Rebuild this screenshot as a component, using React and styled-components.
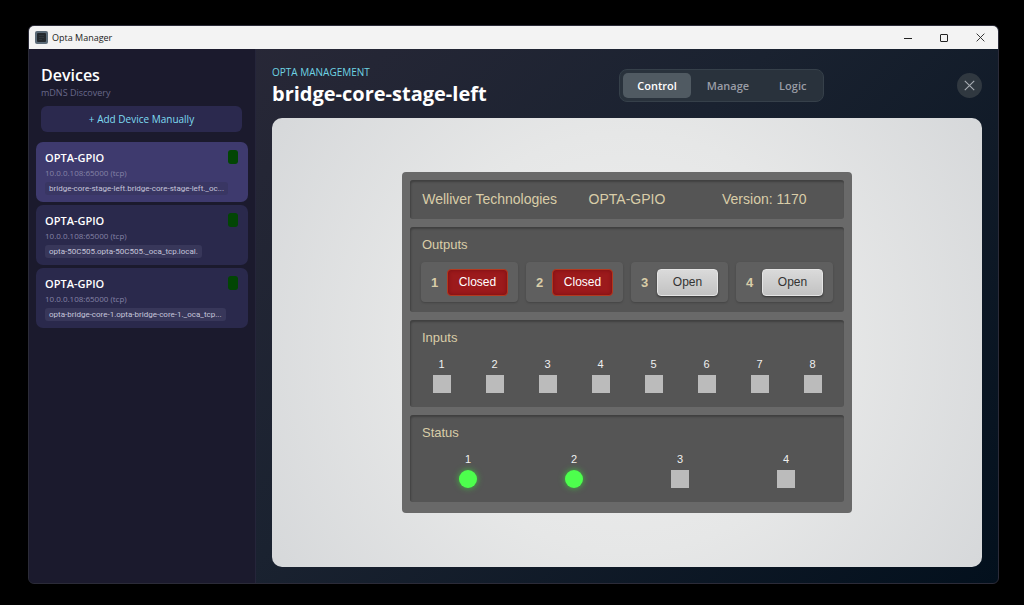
import React, { useState } from "react"
import styled, { createGlobalStyle, css } from "styled-components"

const ui = `"Open Sans", "Noto Sans", sans-serif`
const arial = `"Liberation Sans", Arial, sans-serif`

const GlobalStyle = createGlobalStyle`
  * {
    box-sizing: border-box;
  }
  body {
    margin: 0;
    background: #000;
    font-family: ${ui};
  }
  button {
    margin: 0;
    padding: 0;
    border: none;
    background: none;
    font: inherit;
    cursor: pointer;
  }
  h1, h2, h3, p {
    margin: 0;
  }
`

const Desktop = styled.div`
  display: flex;
  min-height: 100vh;
  padding: 25px 25px 21px 28px;
`

const Window = styled.div`
  flex: 1;
  min-width: 0;
  display: flex;
  flex-direction: column;
  border: 1px solid #2b2b38;
  border-radius: 6px;
  overflow: hidden;
  background: linear-gradient(135deg, #2e2a3a 0%, #1a2230 50%, #03101d 100%);
`

const TitleBar = styled.header`
  display: flex;
  align-items: center;
  height: 23px;
  padding-left: 6px;
  background: #f3f3f3;
  color: #222;
  font-size: 9px;
`

const WindowTitle = styled.span`
  flex: 1;
  margin-left: 4px;
`

const CaptionButton = styled.button`
  display: grid;
  place-items: center;
  width: 36px;
  height: 23px;
  color: #222;
`

const Body = styled.div`
  flex: 1;
  display: flex;
`

const Sidebar = styled.aside`
  width: 227px;
  flex-shrink: 0;
  padding: 16px 7px;
  background: #1b1a2d;
  border-right: 1px solid #25253a;
`

const SidebarTop = styled.div`
  padding: 0 6px 0 5px;
  margin-bottom: 10px;
`

const SidebarTitle = styled.h2`
  color: #fff;
  font-size: 16px;
  font-weight: 600;
  line-height: 20px;
`

const SidebarHint = styled.p`
  color: #69698a;
  font-size: 9px;
  line-height: 16px;
`

const AddButton = styled.button`
  width: 100%;
  height: 26px;
  margin-top: 5px;
  border-radius: 6px;
  background: #2b294e;
  color: #7fdcf2;
  font-size: 10px;
`

const DeviceList = styled.div`
  display: flex;
  flex-direction: column;
  gap: 3px;
`

const DeviceCard = styled.button`
  display: flex;
  align-items: flex-start;
  justify-content: space-between;
  height: 60px;
  padding: 8px 10px 8px 9px;
  border-radius: 7px;
  background: ${props => (props.$active ? "#3e3a6e" : "#2a294c")};
  text-align: left;
`

const DeviceInfo = styled.span`
  display: flex;
  flex-direction: column;
  align-items: flex-start;
`

const DeviceName = styled.span`
  color: #fff;
  font-size: 11px;
  font-weight: 600;
  line-height: 16px;
`

const DeviceAddress = styled.span`
  color: #8583a6;
  font-size: 8px;
  line-height: 14px;
`

const DeviceHost = styled.span`
  margin-top: 2px;
  padding: 0 4px;
  border-radius: 3px;
  background: ${props => (props.$active ? "#393663" : "#38375a")};
  color: #c6c5da;
  font-family: Roboto, ${ui};
  font-size: 8px;
  line-height: 13px;
  white-space: nowrap;
`

const Indicator = styled.span`
  flex-shrink: 0;
  width: 10px;
  height: 14px;
  border-radius: 3px;
  background: #024604;
`

const Main = styled.main`
  flex: 1;
  min-width: 0;
  display: flex;
  flex-direction: column;
  padding: 16px;
`

const MainHeader = styled.div`
  display: flex;
  align-items: center;
  justify-content: space-between;
  height: 41px;
  margin-bottom: 12px;
`

const Heading = styled.div`
  padding-top: 2px;
`

const Eyebrow = styled.p`
  color: #6fd3e3;
  font-size: 10px;
  line-height: 14px;
  text-transform: uppercase;
`

const PageTitle = styled.h1`
  color: #fff;
  font-size: 20px;
  font-weight: 700;
  line-height: 30px;
`

const Tabs = styled.div`
  display: flex;
  gap: 2px;
  padding: 3px;
  border: 1px solid #36404a;
  border-radius: 8px;
  background: #29323c;
`

const Tab = styled.button`
  height: 25px;
  padding: 0 14px;
  border-radius: 5px;
  color: #9a9da6;
  font-size: 11px;
  font-weight: 600;

  ${props =>
    props.$active &&
    css`
      background: #505a62;
      color: #fff;
    `}
`

const CloseButton = styled.button`
  display: grid;
  place-items: center;
  width: 25px;
  height: 25px;
  border-radius: 50%;
  background: #303840;
  color: #a8adb3;
`

const Stage = styled.div`
  flex: 1;
  display: grid;
  place-items: center;
  border-radius: 10px;
  background: radial-gradient(circle, #efefef 0%, #e6e7e7 50%, #d6d8da 100%);
  font-family: ${arial};
`

const Rack = styled.div`
  display: flex;
  flex-direction: column;
  gap: 8px;
  width: 450px;
  max-width: 100%;
  padding: 8px 8px 11px;
  border-radius: 4px;
  background: #696969;
`

const Section = styled.section`
  padding: 9px 5px 10px;
  border-radius: 3px;
  background: #555;
  box-shadow: inset 1px 2px 2px #404040;
`

const Identity = styled(Section)`
  display: grid;
  grid-template-columns: repeat(3, 1fr);
  padding: 10px 11px;
  color: #d9cda8;
  font-size: 14px;
  line-height: 19px;
  text-align: center;
  white-space: nowrap;
`

const SectionTitle = styled.h3`
  padding: 0 7px;
  color: #d9cda8;
  font-size: 13px;
  font-weight: 400;
  line-height: 18px;
`

const OutputRow = styled.div`
  display: grid;
  grid-template-columns: repeat(4, 1fr);
  gap: 8px;
  padding: 0 6px;
  margin-top: 8px;
`

const Output = styled.div`
  display: flex;
  align-items: center;
  justify-content: space-between;
  height: 40px;
  padding: 0 10px;
  border-radius: 4px;
  background: #5f5f5f;
  box-shadow: 0 1px 2px #444;
  color: #d9cda8;
  font-size: 13px;
  font-weight: 700;
`

const OutputButton = styled.button`
  width: 61px;
  height: 27px;
  border: 1px solid #e4e4e4;
  border-radius: 4px;
  background: linear-gradient(#dadada, #c2c2c2);
  box-shadow: 0 1px 2px #333;
  color: #333;
  font-size: 12px;
  font-weight: 400;

  ${props =>
    props.$closed &&
    css`
      border-color: #b23a20;
      background: #9c1a1c;
      box-shadow: inset 0 0 4px #7a0d10;
      color: #fff;
    `}
`

const LampRow = styled.div`
  display: grid;
  grid-template-columns: repeat(${props => props.$columns}, 1fr);
  margin-top: 9px;
  padding-bottom: 4px;
`

const LampCell = styled.div`
  display: flex;
  flex-direction: column;
  align-items: center;
  gap: 3px;
  color: #f0f0f0;
  font-size: 11px;
  line-height: 16px;
`

const Lamp = styled.span`
  width: 18px;
  height: 18px;
  background: #bbb;

  ${props =>
    props.$on &&
    css`
      border-radius: 50%;
      background: #4dff4d;
      box-shadow: 0 0 6px #3fbf3f;
    `}
`

const devices = [
  { id: 1, host: "bridge-core-stage-left.bridge-core-stage-left._oc..." },
  { id: 2, host: "opta-50C505.opta-50C505._oca_tcp.local." },
  { id: 3, host: "opta-bridge-core-1.opta-bridge-core-1._oca_tcp..." },
]

const inputs = [false, false, false, false, false, false, false, false]
const statuses = [true, true, false, false]

const AppIcon = () => (
  <svg width="13" height="13" viewBox="0 0 13 13" aria-hidden="true">
    <rect width="13" height="13" rx="2" fill="#5b6b78" />
    <rect x="2" y="2" width="9" height="9" rx="1" fill="#23292e" />
    <path d="M4 4.5h5M4 6.5h5M4 8.5h3" stroke="#2e363c" />
  </svg>
)

const Cross = ({ size }) => (
  <svg width={size} height={size} viewBox="0 0 10 10" aria-hidden="true">
    <path d="M0.7 0.7l8.6 8.6M9.3 0.7l-8.6 8.6" stroke="currentColor" fill="none" />
  </svg>
)

const Lamps = ({ values }) => (
  <LampRow $columns={values.length}>
    {values.map((on, i) => (
      <LampCell key={i}>
        {i + 1}
        <Lamp $on={on} />
      </LampCell>
    ))}
  </LampRow>
)

export default function App() {
  const [device, setDevice] = useState(1)
  const [tab, setTab] = useState("Control")
  const [outputs, setOutputs] = useState([true, true, false, false])

  const toggle = index =>
    setOutputs(outputs.map((closed, i) => (i === index ? !closed : closed)))

  return (
    <Desktop>
      <GlobalStyle />
      <Window>
        <TitleBar>
          <AppIcon />
          <WindowTitle>Opta Manager</WindowTitle>
          <CaptionButton aria-label="Minimize">
            <svg width="8" height="8" viewBox="0 0 8 8">
              <path d="M0 4.5h8" stroke="currentColor" />
            </svg>
          </CaptionButton>
          <CaptionButton aria-label="Maximize">
            <svg width="8" height="8" viewBox="0 0 8 8">
              <rect x="0.5" y="0.5" width="7" height="7" rx="0.5" stroke="currentColor" fill="none" />
            </svg>
          </CaptionButton>
          <CaptionButton aria-label="Close window">
            <Cross size={9} />
          </CaptionButton>
        </TitleBar>
        <Body>
          <Sidebar>
            <SidebarTop>
              <SidebarTitle>Devices</SidebarTitle>
              <SidebarHint>mDNS Discovery</SidebarHint>
              <AddButton>+ Add Device Manually</AddButton>
            </SidebarTop>
            <DeviceList>
              {devices.map(({ id, host }) => (
                <DeviceCard key={id} $active={id === device} onClick={() => setDevice(id)}>
                  <DeviceInfo>
                    <DeviceName>OPTA-GPIO</DeviceName>
                    <DeviceAddress>10.0.0.108:65000 (tcp)</DeviceAddress>
                    <DeviceHost $active={id === device}>{host}</DeviceHost>
                  </DeviceInfo>
                  <Indicator />
                </DeviceCard>
              ))}
            </DeviceList>
          </Sidebar>
          <Main>
            <MainHeader>
              <Heading>
                <Eyebrow>Opta Management</Eyebrow>
                <PageTitle>bridge-core-stage-left</PageTitle>
              </Heading>
              <Tabs>
                {["Control", "Manage", "Logic"].map(name => (
                  <Tab key={name} $active={name === tab} onClick={() => setTab(name)}>
                    {name}
                  </Tab>
                ))}
              </Tabs>
              <CloseButton aria-label="Close device">
                <Cross size={11} />
              </CloseButton>
            </MainHeader>
            <Stage>
              <Rack>
                <Identity>
                  <span>Welliver Technologies</span>
                  <span>OPTA-GPIO</span>
                  <span>Version: 1170</span>
                </Identity>
                <Section>
                  <SectionTitle>Outputs</SectionTitle>
                  <OutputRow>
                    {outputs.map((closed, i) => (
                      <Output key={i}>
                        {i + 1}
                        <OutputButton $closed={closed} onClick={() => toggle(i)}>
                          {closed ? "Closed" : "Open"}
                        </OutputButton>
                      </Output>
                    ))}
                  </OutputRow>
                </Section>
                <Section>
                  <SectionTitle>Inputs</SectionTitle>
                  <Lamps values={inputs} />
                </Section>
                <Section>
                  <SectionTitle>Status</SectionTitle>
                  <Lamps values={statuses} />
                </Section>
              </Rack>
            </Stage>
          </Main>
        </Body>
      </Window>
    </Desktop>
  )
}
